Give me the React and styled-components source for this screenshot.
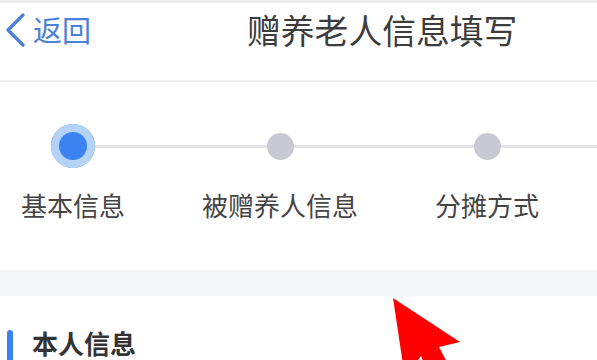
import styled, { createGlobalStyle } from 'styled-components';

const GlobalStyle = createGlobalStyle`
  html, body {
    margin: 0;
    padding: 0;
    background: #ffffff;
    font-family: "Noto Sans CJK SC", "Noto Sans", sans-serif;
  }
  * { box-sizing: border-box; }
`;

const Page = styled.div`
  width: 597px;
  height: 360px;
  overflow: hidden;
  position: relative;
  background: #ffffff;
`;

const StatusStrip = styled.div`
  height: 3px;
  background: #ececec;
`;

// 상단 네비게이션 바
const NavBar = styled.div`
  height: 79px;
  padding-bottom: 24px;
  display: flex;
  align-items: center;
  border-bottom: 2px solid #f0f0f0;
`;

const BackButton = styled.button`
  display: flex;
  align-items: center;
  gap: 7px;
  margin: 0 0 0 4px;
  padding: 0;
  border: 0;
  background: none;
  color: #4a7fda;
  font-family: inherit;
  font-size: 29px;
  line-height: 1;
`;

const NavTitle = styled.h1`
  margin: 0 0 0 156px;
  font-size: 33.8px;
  font-weight: 400;
  color: #3c3c3c;
  line-height: 1;
  letter-spacing: 0;
`;

const StepsSection = styled.div`
  padding: 42px 0 52px 0;
`;

const Track = styled.div`
  position: relative;
  display: flex;
  gap: 61px;
  height: 44px;

  &::before {
    content: '';
    position: absolute;
    left: 73px;
    right: 0;
    top: 21px;
    height: 3px;
    background: #e4e4ea;
  }
`;

const DotCell = styled.div`
  width: 146px;
  display: flex;
  justify-content: center;
  align-items: center;
  position: relative;
  z-index: 1;
`;

const Dot = styled.span`
  width: ${(p) => (p.$active ? 44 : 27)}px;
  height: ${(p) => (p.$active ? 44 : 27)}px;
  border-radius: 50%;
  background: ${(p) => (p.$active ? '#3c82f0' : '#c9c9d3')};
  box-shadow: ${(p) => (p.$active ? 'inset 0 0 0 8px #b5d3f7' : 'none')};
`;

const Labels = styled.div`
  display: flex;
  gap: 61px;
  margin-top: 24px;
`;

const StepLabel = styled.div`
  width: 146px;
  display: flex;
  justify-content: center;
  font-size: 26px;
  line-height: 26px;
  color: #454545;
  white-space: nowrap;
`;

const Divider = styled.div`
  height: 26px;
  background: #f4f6f9;
`;

const SectionHead = styled.div`
  display: flex;
  align-items: flex-start;
  padding-top: 33px;
  height: 64px;
`;

const HeadBar = styled.span`
  width: 6px;
  height: 34px;
  margin: 1px 0 0 7px;
  border-radius: 3px;
  background: #3c82f0;
`;

const HeadText = styled.h2`
  margin: 0 0 0 19px;
  font-size: 26px;
  line-height: 28px;
  font-weight: 700;
  color: #333333;
`;

const Pointer = styled.svg`
  position: absolute;
  left: 0;
  top: 0;
  pointer-events: none;
`;

const steps = ['基本信息', '被赠养人信息', '分摊方式'];

export default function App() {
  return (
    <>
      <GlobalStyle />
      <Page>
        <StatusStrip />
        <NavBar>
          <BackButton>
            <svg width='22' height='34' viewBox='0 0 22 34'>
              <path d='M19 2 L4 17 L19 32' fill='none' stroke='#4a7fda' strokeWidth='3.2' strokeLinecap='round' strokeLinejoin='round' />
            </svg>
            返回
          </BackButton>
          <NavTitle>赠养老人信息填写</NavTitle>
        </NavBar>

        <StepsSection>
          <Track>
            {steps.map((s, i) => (
              <DotCell key={s}>
                <Dot $active={i === 0} />
              </DotCell>
            ))}
          </Track>
          <Labels>
            {steps.map((s) => (
              <StepLabel key={s}>{s}</StepLabel>
            ))}
          </Labels>
        </StepsSection>

        <Divider />

        <SectionHead>
          <HeadBar />
          <HeadText>本人信息</HeadText>
        </SectionHead>

        <Pointer width='597' height='360' viewBox='0 0 597 360'>
          <polygon points='393,298 460,342 439,347 472,410 447,422 421,356 405,378' fill='#ff0000' />
        </Pointer>
      </Page>
    </>
  );
}
